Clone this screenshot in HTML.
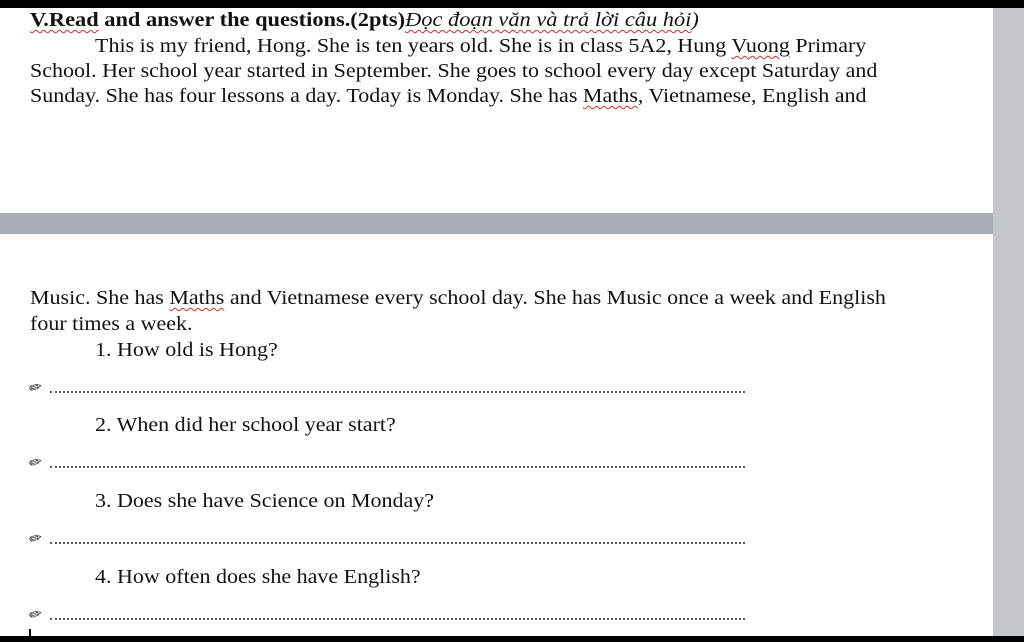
<!DOCTYPE html>
<html><head><meta charset="utf-8"><style>
body{margin:0;width:1024px;height:642px;overflow:hidden;background:#c3c7cc;position:relative;font-family:"Liberation Serif","Noto Serif CJK SC",serif;color:#111;}
.blk{position:absolute;left:0;width:1024px;background:#000;}
.pg{position:absolute;left:0;width:993px;background:#fff;}
.gap{position:absolute;left:0;width:993px;background:#a9aeb6;}
.t{position:absolute;white-space:nowrap;font-size:20px;line-height:25px;transform:scaleX(1.1);transform-origin:0 0;}
.sq{text-decoration:underline wavy #c33;text-decoration-thickness:1px;text-underline-offset:3px;}
.dot{position:absolute;left:50px;width:695px;border-top:2px dotted #555;}
.pen{position:absolute;left:30px;font-size:15px;color:#222;transform:rotate(-60deg);}
</style></head><body>
<div class="blk" style="top:0;height:8px"></div>
<div class="pg" style="top:8px;height:205px"></div>
<div class="gap" style="top:213px;height:21px"></div>
<div class="pg" style="top:234px;height:402px"></div>
<div class="blk" style="top:636px;height:6px"></div>
<div style="position:absolute;left:29px;top:629px;width:2px;height:8px;background:#000"></div>

<div class="t" style="left:30px;top:8px;transform:scaleX(1.12)"><b><span class="sq">V.Read</span> and answer the questions.(2pts)</b><i><span class="sq">Đọc đoạn văn và trả lời câu hỏi</span>)</i></div>
<div class="t" style="left:95px;top:34px">This is my friend, Hong. She is ten years old. She is in class 5A2, Hung <span class="sq">Vuong</span> Primary</div>
<div class="t" style="left:30px;top:59px">School. Her school year started in September. She goes to school every day except Saturday and</div>
<div class="t" style="left:30px;top:84px">Sunday. She has four lessons a day. Today is Monday. She has <span class="sq">Maths</span>, Vietnamese, English and</div>

<div class="t" style="left:30px;top:286px">Music. She has <span class="sq">Maths</span> and Vietnamese every school day. She has Music once a week and English</div>
<div class="t" style="left:30px;top:312px">four times a week.</div>
<div class="t" style="left:95px;top:338px">1. How old is Hong?</div>
<div class="pen" style="top:378px">✎</div><div class="dot" style="top:391px"></div>
<div class="t" style="left:95px;top:413px">2. When did her school year start?</div>
<div class="pen" style="top:453px">✎</div><div class="dot" style="top:466px"></div>
<div class="t" style="left:95px;top:489px">3. Does she have Science on Monday?</div>
<div class="pen" style="top:529px">✎</div><div class="dot" style="top:542px"></div>
<div class="t" style="left:95px;top:565px">4. How often does she have English?</div>
<div class="pen" style="top:605px">✎</div><div class="dot" style="top:618px"></div>
</body></html>
